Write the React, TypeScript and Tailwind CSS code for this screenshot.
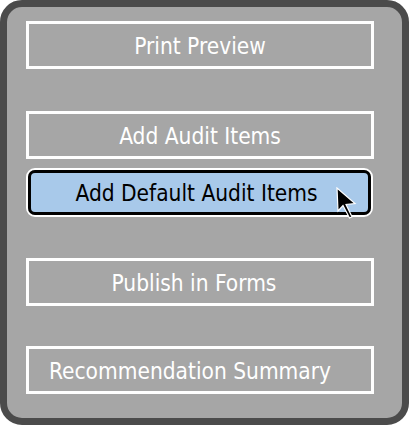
import React from 'react';

const FONT = { fontFamily: '"DejaVu Sans Condensed", "DejaVu Sans", Tahoma, sans-serif' };

function OutlineButton({ label, className = '' }: { label: string; className?: string }) {
  return (
    <div
      className={`w-[348px] h-[48px] border-[3px] border-white flex items-center justify-center pt-[3px] text-white text-[22.5px] ${className}`}
    >
      {label}
    </div>
  );
}

export default function App() {
  return (
    <div className="w-[410px] h-[425px] bg-white" style={FONT}>
      <div className="relative w-[409px] h-[425px] rounded-[22px] border-[7px] border-[#4b4b4b] bg-[#a6a6a6] flex flex-col pl-[19px] pt-[14px]">
        <OutlineButton label="Print Preview" />
        <OutlineButton label="Add Audit Items" className="mt-[42px]" />

        <div className="mt-[9px] w-[347px] h-[49px] rounded-[9px] border-2 border-white">
          <div className="h-full rounded-[7px] border-[3px] border-black bg-[#a8c9ea] flex items-center justify-center pr-[6px] pt-[2px] text-black text-[22.5px]">
            Add Default Audit Items
          </div>
        </div>

        <OutlineButton label="Publish in Forms" className="mt-[41px] pr-[12px]" />
        <OutlineButton label="Recommendation Summary" className="mt-[40px] pr-[20px]" />

        <svg
          className="absolute left-[329px] top-[180px]"
          width="22"
          height="33"
          viewBox="-1 -1 22 33"
        >
          <path
            d="M0 0 L1 23 L6 17.5 L12.5 30 L15 28.8 L9 16.5 L18 15.5 Z"
            fill="#000"
            stroke="#fff"
            strokeWidth="1.2"
            strokeLinejoin="miter"
          />
        </svg>
      </div>
    </div>
  );
}
